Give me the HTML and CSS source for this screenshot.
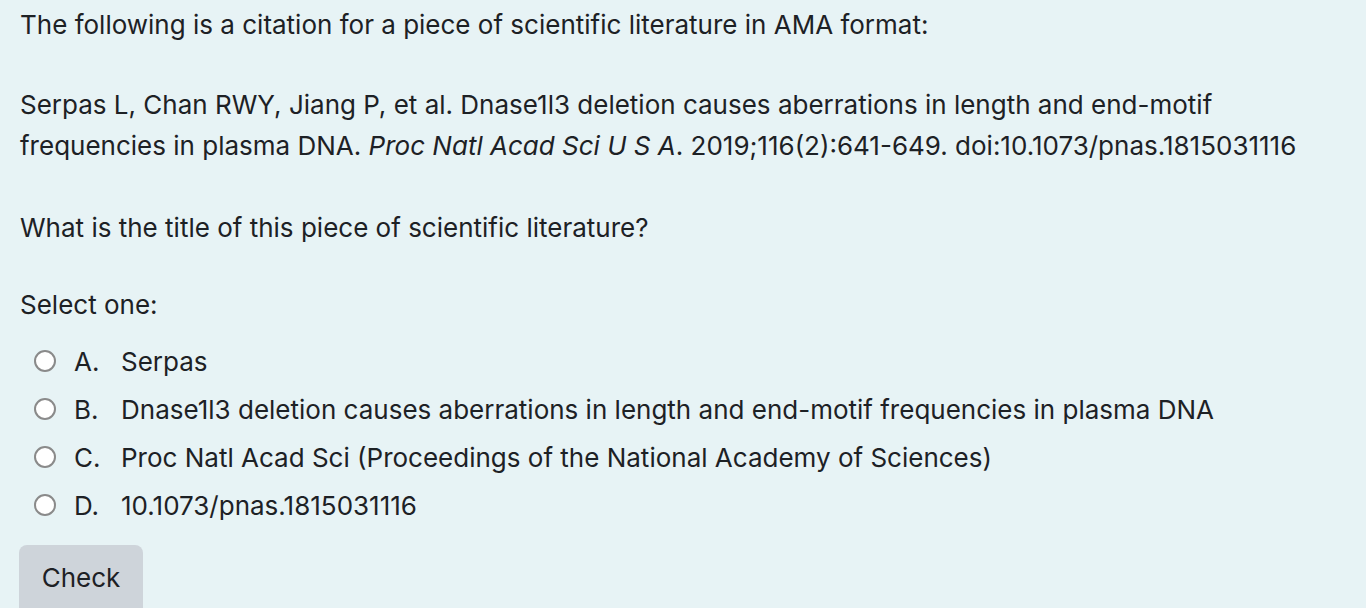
FILE: index.html
```html
<!DOCTYPE html>
<html>
<head>
<meta charset="utf-8">
<link rel="stylesheet" href="styles.css">
</head>
<body>
<div class="question">
  <p class="intro">The following is a citation for a piece of scientific literature in AMA format:</p>
  <p class="citation">Serpas L, Chan RWY, Jiang P, et al. Dnase1l3 deletion causes aberrations in length and end-motif frequencies in plasma DNA. <em>Proc Natl Acad Sci U S A</em>. 2019;116(2):641-649. doi:10.1073/pnas.1815031116</p>
  <p class="prompt">What is the title of this piece of scientific literature?</p>
  <p class="select">Select one:</p>
  <div class="answers">
    <label class="option"><span class="radio"></span><span class="letter">A.</span><span class="text">Serpas</span></label>
    <label class="option"><span class="radio"></span><span class="letter">B.</span><span class="text">Dnase1l3 deletion causes aberrations in length and end-motif frequencies in plasma DNA</span></label>
    <label class="option"><span class="radio"></span><span class="letter">C.</span><span class="text">Proc Natl Acad Sci (Proceedings of the National Academy of Sciences)</span></label>
    <label class="option"><span class="radio"></span><span class="letter">D.</span><span class="text">10.1073/pnas.1815031116</span></label>
  </div>
  <button class="check">Check</button>
</div>
</body>
</html>
```
FILE: styles.css
```css
html, body {
  margin: 0;
  padding: 0;
  background: #ffffff;
}
body {
  font-family: Inter, "Liberation Sans", sans-serif;
  font-size: 26px;
  color: #1d2125;
}
.question {
  width: 1366px;
  height: 608px;
  background: #e7f3f5;
  padding: 0 20px;
  box-sizing: border-box;
  overflow: hidden;
}
p {
  margin: 0;
  line-height: 41px;
}
.intro {
  padding-top: 4px;
}
.citation {
  margin-top: 39px;
}
.prompt {
  margin-top: 41px;
}
.select {
  margin-top: 36px;
}
.answers {
  margin-top: 12px;
  padding-left: 14px;
  display: flex;
  flex-direction: column;
}
.option {
  display: flex;
  align-items: center;
  height: 48px;
}
.radio {
  width: 18px;
  height: 18px;
  border: 2px solid #8a8a8a;
  border-radius: 50%;
  background: #fff;
  flex: none;
}
.letter {
  margin-left: 18px;
  width: 47px;
}
.check {
  margin-top: 16px;
  width: 124px;
  height: 70px;
  background: #ced4da;
  border: none;
  border-radius: 8px;
  font-family: inherit;
  font-size: 26px;
  color: #1d2125;
  padding: 0;
  padding-bottom: 6px;
  margin-left: -1px;
}
```
